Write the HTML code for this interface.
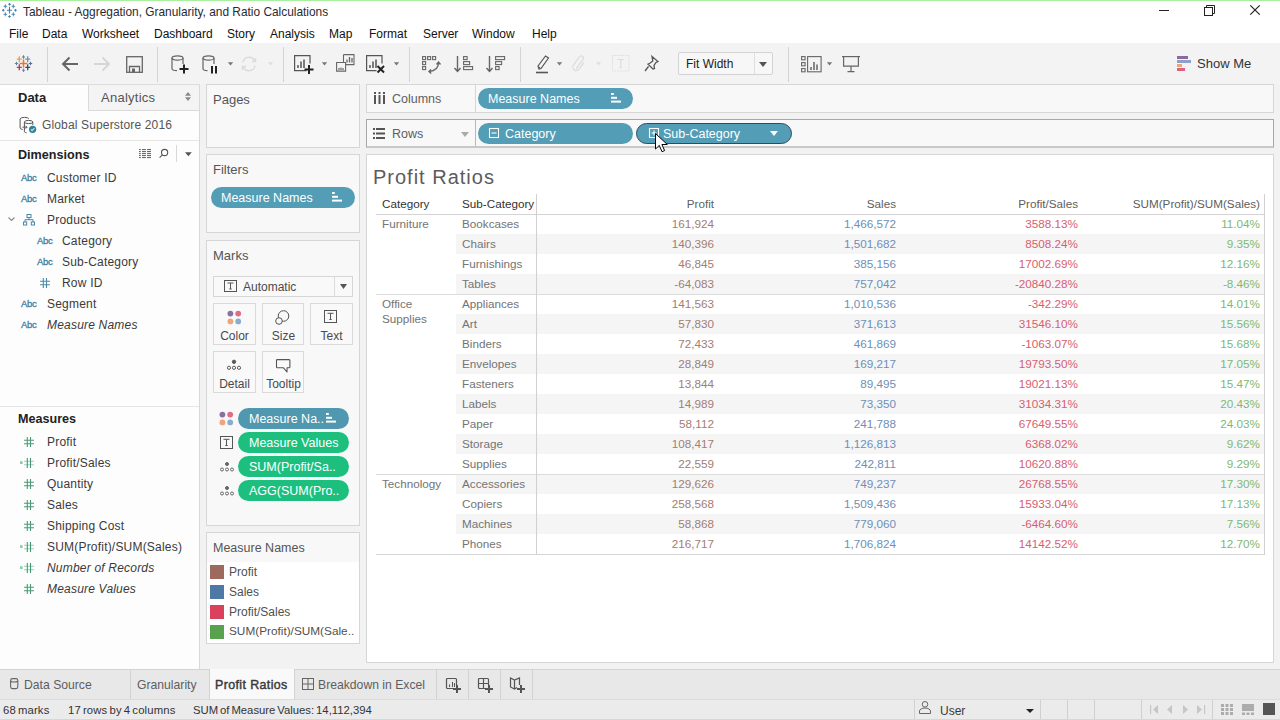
<!DOCTYPE html>
<html><head><meta charset="utf-8">
<style>
*{box-sizing:border-box;margin:0;padding:0}
html,body{width:1280px;height:720px;overflow:hidden;background:#f3f3f4;font-family:"Liberation Sans",sans-serif;color:#333}
.a{position:absolute}
.t{position:absolute;white-space:nowrap;line-height:1}
svg{position:absolute;overflow:visible}
</style></head><body>
<!-- top green line -->
<div class="a" style="left:0;top:0;width:1280px;height:1px;background:#a8f0a0"></div>
<!-- title bar -->
<div class="a" style="left:0;top:1px;width:1280px;height:21px;background:#fff"></div>
<div class="t" style="left:23px;top:7px;font-size:11.9px;color:#2a2a35">Tableau - Aggregation, Granularity, and Ratio Calculations</div>
<svg style="left:1159px;top:10px" width="10" height="2" viewBox="0 0 10 2"><path d="M0 .5h10" stroke="#222" stroke-width="1"/></svg>
<svg style="left:1204px;top:5px" width="11" height="11" viewBox="0 0 11 11" fill="none" stroke="#222" stroke-width="1"><rect x="0.5" y="2.5" width="8" height="8"/><path d="M2.5 2.5V.5h8v8h-2"/></svg>
<svg style="left:1250px;top:5px" width="10" height="10" viewBox="0 0 10 10" fill="none" stroke="#222" stroke-width="1"><path d="M.3 .3l9.4 9.4M9.7 .3L.3 9.7" stroke-width="1.2"/></svg>
<svg style="left:0;top:0" width="20" height="20" viewBox="0 0 20 20" fill="none" stroke="#3f7fa8"><path d="M9.5 6.8v6.6M7 10.3h5" stroke-width="1.1"/><path d="M9.5 3v2.6M8.2 4.3h2.6M9.5 15.2v2.6M8.2 16.5h2.6M2 10.3h2.6M3.3 9v2.6M14.2 10.3h2.6M15.5 9v2.6" stroke-width="1.1"/><path d="M5.3 4.3v4M3.5 6.3h3.6M13.3 4.3v4M11.5 6.3h3.6M5.3 12.3v4M3.5 14.3h3.6M13.3 12.3v4M11.5 14.3h3.6" stroke-width="0.9"/></svg>
<!-- menu -->
<div class="a" style="left:0;top:22px;width:1280px;height:21px;background:#fff"></div>
<div class="t" style="top:28px;left:9px;font-size:12px;color:#111">File</div>
<div class="t" style="top:28px;left:42px;font-size:12px;color:#111">Data</div>
<div class="t" style="top:28px;left:82px;font-size:12px;color:#111">Worksheet</div>
<div class="t" style="top:28px;left:154px;font-size:12px;color:#111">Dashboard</div>
<div class="t" style="top:28px;left:227px;font-size:12px;color:#111">Story</div>
<div class="t" style="top:28px;left:270px;font-size:12px;color:#111">Analysis</div>
<div class="t" style="top:28px;left:329px;font-size:12px;color:#111">Map</div>
<div class="t" style="top:28px;left:369px;font-size:12px;color:#111">Format</div>
<div class="t" style="top:28px;left:423px;font-size:12px;color:#111">Server</div>
<div class="t" style="top:28px;left:472px;font-size:12px;color:#111">Window</div>
<div class="t" style="top:28px;left:532px;font-size:12px;color:#111">Help</div>
<!-- toolbar -->
<div class="a" style="left:0;top:43px;width:1280px;height:41px;background:#f3f3f4"></div>
<div class="a" style="left:47px;top:47px;width:1px;height:35px;background:#d4d4d4"></div>
<div class="a" style="left:157px;top:47px;width:1px;height:35px;background:#d4d4d4"></div>
<div class="a" style="left:283px;top:47px;width:1px;height:35px;background:#d4d4d4"></div>
<div class="a" style="left:409px;top:47px;width:1px;height:35px;background:#d4d4d4"></div>
<div class="a" style="left:520px;top:47px;width:1px;height:35px;background:#d4d4d4"></div>
<div class="a" style="left:788px;top:47px;width:1px;height:35px;background:#d4d4d4"></div>
<!-- tableau logo -->
<svg style="left:14px;top:54px" width="20" height="20" viewBox="0 0 20 20">
<path d="M9.5 5.5v8M5.7 9.5h7.6" stroke="#e8762c" stroke-width="1.5"/>
<path d="M9.5 1.2v3.6M7.9 3h3.2" stroke="#5b879a" stroke-width="1.1"/>
<path d="M9.5 14.5v3.6M7.9 16.3h3.2" stroke="#7e86a8" stroke-width="1.1"/>
<path d="M2.5 7.7v3.6M0.8 9.5h3.4" stroke="#5a8aa0" stroke-width="1.1"/>
<path d="M16.5 7.7v3.6M14.8 9.5h3.4" stroke="#5c6a9a" stroke-width="1.1"/>
<path d="M5.3 2.2v6M2.8 5.2h5" stroke="#e9a343" stroke-width="1.3"/>
<path d="M13.7 2.2v6M11.2 5.2h5" stroke="#6a98a8" stroke-width="1.3"/>
<path d="M5.3 10.3v6M2.8 13.3h5" stroke="#c72f54" stroke-width="1.3"/>
<path d="M13.7 10.3v6M11.2 13.3h5" stroke="#2e4a7a" stroke-width="1.3"/>
</svg>
<!-- back / fwd -->
<svg style="left:61px;top:56px" width="18" height="16" viewBox="0 0 18 16" fill="none" stroke="#666" stroke-width="2"><path d="M2 8h15M8.5 1.5L2 8l6.5 6.5"/></svg>
<svg style="left:93px;top:56px" width="18" height="16" viewBox="0 0 18 16" fill="none" stroke="#d6d6d6" stroke-width="2"><path d="M1 8h15M9.5 1.5L16 8l-6.5 6.5"/></svg>
<!-- save -->
<svg style="left:126px;top:56px" width="17" height="17" viewBox="0 0 17 17" fill="none" stroke="#666" stroke-width="1.3"><rect x="0.7" y="0.7" width="15.6" height="15.6"/><path d="M3.5 16.3V10.5h10v5.8"/><rect x="6" y="12.5" width="3" height="3.5" fill="#666" stroke="none"/></svg>
<!-- datasource + -->
<svg style="left:171px;top:55px" width="18" height="19" viewBox="0 0 18 19" fill="none" stroke="#666" stroke-width="1.2"><ellipse cx="6.5" cy="3" rx="5.5" ry="2.2"/><path d="M1 3v10.5c0 1.2 2.2 2.2 5 2.2M12 3v6"/><path d="M13 9.5v9M8.5 14h9" stroke="#222" stroke-width="2"/></svg>
<!-- pause ds -->
<svg style="left:202px;top:55px" width="18" height="19" viewBox="0 0 18 19" fill="none" stroke="#666" stroke-width="1.2"><ellipse cx="6.5" cy="3" rx="5.5" ry="2.2"/><path d="M1 3v10.5c0 1.2 2.2 2.2 4.5 2.2M12 3v6"/><path d="M10 11v7.5M14 11v7.5" stroke="#222" stroke-width="2"/></svg>
<svg style="left:227px;top:62px" width="7" height="4" viewBox="0 0 7 4"><path d="M.8 .3h5.4L3.5 3.6z" fill="#777"/></svg>
<svg style="left:241px;top:56px" width="16" height="16" viewBox="0 0 16 16" fill="none" stroke="#dadada" stroke-width="1.4"><path d="M2 6.5A6 6 0 0 1 13.5 5M14 9.5A6 6 0 0 1 2.5 11"/><path d="M14.5 2v3.5H11M1.5 14v-3.5H5"/></svg>
<svg style="left:267px;top:62px" width="7" height="4" viewBox="0 0 7 4"><path d="M.8 .3h5.4L3.5 3.6z" fill="#ddd"/></svg>
<!-- new sheet -->
<svg style="left:294px;top:55px" width="21" height="19" viewBox="0 0 21 19" fill="none" stroke="#555" stroke-width="1.2"><path d="M12.5 15.6H0.6V0.6h15.4v8"/><path d="M4 13V10M7 13V6.5M10 13V4.5" stroke-width="1.5"/><path d="M15 10v9M10.5 14.5h9" stroke="#222" stroke-width="2"/></svg>
<svg style="left:321px;top:62px" width="7" height="4" viewBox="0 0 7 4"><path d="M.8 .3h5.4L3.5 3.6z" fill="#777"/></svg>
<!-- duplicate -->
<svg style="left:336px;top:54px" width="19" height="18" viewBox="0 0 19 18" fill="none" stroke="#666" stroke-width="1.1"><path d="M0.6 8.5h9v8.6H0.6z" fill="#f3f3f4"/><path d="M7.5 0.6h10.5v10H10"/><path d="M7.5 0.6v7.5"/><path d="M11 8.5v-3M13.5 8.5V3M16 8.5V4" stroke-width="1.3"/><path d="M3 16v-2M5 16v-2.5M7 16v-2" stroke-width="1.2"/></svg>
<!-- clear -->
<svg style="left:366px;top:55px" width="20" height="19" viewBox="0 0 20 19" fill="none" stroke="#555" stroke-width="1.2"><path d="M10.5 15.6H0.6V0.6h15.4v8"/><path d="M4 13V10M7 13V6.5M10 13V4.5" stroke-width="1.5"/><path d="M11.5 11l6.5 6.5M18 11l-6.5 6.5" stroke="#222" stroke-width="2"/></svg>
<svg style="left:393px;top:62px" width="7" height="4" viewBox="0 0 7 4"><path d="M.8 .3h5.4L3.5 3.6z" fill="#777"/></svg>
<!-- swap -->
<svg style="left:422px;top:56px" width="20" height="18" viewBox="0 0 20 18" fill="none" stroke="#666" stroke-width="1.1"><rect x="0.6" y="0.6" width="3" height="3"/><rect x="5.6" y="0.6" width="3" height="3"/><rect x="10.6" y="0.6" width="3" height="3"/><rect x="0.6" y="5.6" width="3" height="3"/><rect x="0.6" y="10.6" width="3" height="3"/><path d="M16.5 6.5c0 5-3 8.5-9.5 9" stroke-width="1.4"/><path d="M14.5 8.5l2-2.5 2 2.5M9 13.5l-2 2 2.2 2" stroke-width="1.4"/></svg>
<!-- sort asc -->
<svg style="left:454px;top:56px" width="20" height="17" viewBox="0 0 20 17" fill="none" stroke="#666" stroke-width="1.1"><path d="M3.5 0v15M0.5 12l3 3.5 3-3.5" stroke-width="1.4"/><rect x="9.6" y="0.6" width="3.5" height="3"/><rect x="9.6" y="5.6" width="6" height="3"/><rect x="9.6" y="10.6" width="9" height="3"/></svg>
<!-- sort desc -->
<svg style="left:486px;top:56px" width="20" height="17" viewBox="0 0 20 17" fill="none" stroke="#666" stroke-width="1.1"><path d="M3.5 0v15M0.5 12l3 3.5 3-3.5" stroke-width="1.4"/><rect x="9.6" y="0.6" width="9" height="3"/><rect x="9.6" y="5.6" width="6" height="3"/><rect x="9.6" y="10.6" width="3.5" height="3"/></svg>
<!-- highlighter -->
<svg style="left:535px;top:55px" width="16" height="19" viewBox="0 0 16 19" fill="none" stroke="#555" stroke-width="1.2"><path d="M4 14l-1-3 7.5-10 3 2L6 13.5z"/><path d="M3.5 12l1.5 1" /><path d="M1 17.5h12" stroke="#555" stroke-width="1.6"/></svg>
<svg style="left:556px;top:62px" width="7" height="4" viewBox="0 0 7 4"><path d="M.8 .3h5.4L3.5 3.6z" fill="#777"/></svg>
<svg style="left:572px;top:56px" width="14" height="17" viewBox="0 0 14 17" fill="none" stroke="#ddd" stroke-width="1.3"><path d="M4 13L11 3.5a2.2 2.2 0 0 0-3.6-2.6L1.5 9a3.5 3.5 0 0 0 5.6 4.2L12 6.5"/></svg>
<svg style="left:595px;top:62px" width="7" height="4" viewBox="0 0 7 4"><path d="M.8 .3h5.4L3.5 3.6z" fill="#e0e0e0"/></svg>
<svg style="left:612px;top:55px" width="18" height="17" viewBox="0 0 18 17" fill="none" stroke="#ddd" stroke-width="1" stroke-dasharray="1.5 1"><rect x="0.5" y="0.5" width="16.5" height="15.5"/><path d="M5.5 4.5h6.5M8.75 4.5v8M7.5 12.5h2.5" stroke-dasharray="none" stroke-width="1.2"/></svg>
<!-- pin -->
<svg style="left:644px;top:55px" width="16" height="17" viewBox="0 0 16 17" fill="none" stroke="#555" stroke-width="1.3"><path d="M8 1.5l6 5-2 1-2 3 .5 3-1.5.5-5-4.8 1.8-1 3-2.3z"/><path d="M4.5 11.5L1 16"/></svg>
<!-- fit width -->
<div class="a" style="left:678px;top:52px;width:95px;height:23px;background:#f7f7f8;border:1px solid #d3d3d3;border-radius:2px"></div>
<div class="a" style="left:754px;top:53px;width:1px;height:21px;background:#dedede"></div>
<div class="t" style="left:686px;top:58px;font-size:12px;color:#222">Fit Width</div>
<svg style="left:759px;top:62px" width="8" height="5" viewBox="0 0 8 5"><path d="M0 0h8L4 5z" fill="#555"/></svg>
<!-- cards -->
<svg style="left:801px;top:56px" width="21" height="17" viewBox="0 0 21 17" fill="none" stroke="#666" stroke-width="1.1"><rect x="0.6" y="0.6" width="3.5" height="3.2"/><rect x="0.6" y="6.6" width="3.5" height="3.2"/><rect x="0.6" y="12.6" width="3.5" height="3.2"/><rect x="6.6" y="0.6" width="13.5" height="15.2"/><path d="M10 14v-3M13 14V6M16 14V8.5" stroke-width="1.5"/></svg>
<svg style="left:826px;top:62px" width="7" height="4" viewBox="0 0 7 4"><path d="M.8 .3h5.4L3.5 3.6z" fill="#777"/></svg>
<!-- presentation -->
<svg style="left:842px;top:55px" width="18" height="18" viewBox="0 0 18 18" fill="none" stroke="#666" stroke-width="1.2"><path d="M0 1.6h18"/><path d="M1.6 1.6v9.5h14.8V1.6"/><path d="M9 11v5.5M5.5 16.6h7"/></svg>
<!-- show me -->
<svg style="left:1177px;top:56px" width="15" height="16" viewBox="0 0 15 16"><rect x="0" y="0" width="11" height="3" fill="#8a6aa0"/><rect x="0" y="4" width="14" height="3" fill="#8aa2c8"/><rect x="0" y="8" width="5" height="3" fill="#eea57c"/><rect x="0" y="12" width="8" height="3" fill="#e0607e"/></svg>
<div class="t" style="left:1197px;top:57px;font-size:13px;color:#333">Show Me</div>

<!-- LEFT PANEL -->
<div class="a" style="left:0;top:84px;width:200px;height:585px;background:#fdfdfd;border-right:1px solid #d9d9d9;border-top:1px solid #dcdcdc"></div>

<div class="a" style="left:88px;top:85px;width:111px;height:26px;background:#f4f4f5;border-left:1px solid #dadada;border-bottom:1px solid #dadada"></div>
<div class="t" style="left:18px;top:91px;font-size:13px;font-weight:bold;color:#222">Data</div>
<div class="t" style="left:101px;top:91px;font-size:13px;letter-spacing:0.25px;color:#555">Analytics</div>
<svg style="left:185px;top:92px" width="6" height="9" viewBox="0 0 6 9" fill="#888"><path d="M0 3.7L3 0l3 3.7zM0 5.3h6L3 9z"/></svg>
<svg style="left:19px;top:116px" width="19" height="18" viewBox="0 0 19 18" fill="none" stroke="#555" stroke-width="1"><path d="M9.8 2.6C8.8 .9 2.2 .9 1.1 2.8V12c0 .8 1.5 1.3 2.6 1.4"/><ellipse cx="9.6" cy="6" rx="4.2" ry="1.6"/><path d="M5.4 6v9.6c0 .7 1 1 2.2 1.2M13.8 6v3"/><path d="M3.3 11.2h4.6M6.6 9.7l1.5 1.5-1.5 1.5" stroke="#6a5a5e"/><circle cx="13.6" cy="13.3" r="3.6" fill="#2f8099" stroke="none"/><path d="M11.9 13.4l1.2 1.2 2.3-2.5" stroke="#c4e8f4" stroke-width="1.1"/></svg>
<div class="t" style="left:42px;top:119px;font-size:12px;letter-spacing:0.15px;color:#555">Global Superstore 2016</div>
<div class="a" style="left:0;top:140px;width:199px;height:1px;background:#e6e6e6"></div>
<div class="t" style="left:18px;top:149px;font-size:12.6px;font-weight:bold;color:#222">Dimensions</div>
<svg style="left:139px;top:149px" width="12" height="10" viewBox="0 0 12 10" fill="#6a6a6a"><rect x="0" y="0" width="1.8" height="1.1"/><rect x="3" y="0" width="3.9" height="1.1"/><rect x="8" y="0" width="4" height="1.1"/><rect x="0" y="2" width="1.8" height="1.1"/><rect x="3" y="2" width="3.9" height="1.1"/><rect x="8" y="2" width="4" height="1.1"/><rect x="0" y="4" width="1.8" height="1.1"/><rect x="3" y="4" width="3.9" height="1.1"/><rect x="8" y="4" width="4" height="1.1"/><rect x="0" y="6" width="1.8" height="1.1"/><rect x="3" y="6" width="3.9" height="1.1"/><rect x="8" y="6" width="4" height="1.1"/><rect x="0" y="8" width="1.8" height="1.1"/><rect x="3" y="8" width="3.9" height="1.1"/><rect x="8" y="8" width="4" height="1.1"/></svg>
<svg style="left:159px;top:148px" width="10" height="10" viewBox="0 0 10 10" fill="none" stroke="#555" stroke-width="1.1"><circle cx="5.6" cy="4.5" r="3.1"/><path d="M3.4 6.8L.6 9.6"/></svg>
<div class="a" style="left:176px;top:145px;width:1px;height:17px;background:#d8d8d8"></div>
<svg style="left:185px;top:152px" width="7" height="5" viewBox="0 0 7 5"><path d="M0 .2h6.8L3.4 4.3z" fill="#555"/></svg>
<div class="t" style="left:21px;top:173px;font-size:9.5px;color:#417f9f;letter-spacing:-0.3px;-webkit-text-stroke:0.3px #417f9f">Abc</div><div class="t" style="left:47px;top:172px;font-size:12px;color:#3a3a3a;letter-spacing:0.2px;">Customer ID</div>
<div class="t" style="left:21px;top:194px;font-size:9.5px;color:#417f9f;letter-spacing:-0.3px;-webkit-text-stroke:0.3px #417f9f">Abc</div><div class="t" style="left:47px;top:193px;font-size:12px;color:#3a3a3a;letter-spacing:0.2px;">Market</div>
<svg style="left:8px;top:217px" width="7" height="5" viewBox="0 0 7 5" fill="none" stroke="#888" stroke-width="1.1"><path d="M.5 .5L3.5 3.5 6.5 .5"/></svg><svg style="left:23px;top:214px" width="12" height="12" viewBox="0 0 12 12" fill="none" stroke="#4a88a8" stroke-width="1"><rect x="4" y="0.5" width="4" height="3"/><path d="M6 3.5v2.2M2 5.7h8M2 5.7v2.3M10 5.7v2.3"/><rect x="0.5" y="8" width="3.2" height="3"/><rect x="8.3" y="8" width="3.2" height="3"/></svg><div class="t" style="left:47px;top:214px;font-size:12px;color:#3a3a3a;letter-spacing:0.2px;">Products</div>
<div class="t" style="left:37px;top:236px;font-size:9.5px;color:#417f9f;letter-spacing:-0.3px;-webkit-text-stroke:0.3px #417f9f">Abc</div><div class="t" style="left:62px;top:235px;font-size:12px;color:#3a3a3a;letter-spacing:0.2px;">Category</div>
<div class="t" style="left:37px;top:257px;font-size:9.5px;color:#417f9f;letter-spacing:-0.3px;-webkit-text-stroke:0.3px #417f9f">Abc</div><div class="t" style="left:62px;top:256px;font-size:12px;color:#3a3a3a;letter-spacing:0.2px;">Sub-Category</div>
<svg style="left:40px;top:278px" width="10" height="10" viewBox="0 0 10 10" stroke="#4d8aa7" stroke-width="1.1"><path d="M3.3 0v10M6.5 0v10M0 3.3h10M0 6.7h10"/></svg><div class="t" style="left:62px;top:277px;font-size:12px;color:#3a3a3a;letter-spacing:0.2px;">Row ID</div>
<div class="t" style="left:21px;top:299px;font-size:9.5px;color:#417f9f;letter-spacing:-0.3px;-webkit-text-stroke:0.3px #417f9f">Abc</div><div class="t" style="left:47px;top:298px;font-size:12px;color:#3a3a3a;letter-spacing:0.2px;">Segment</div>
<div class="t" style="left:21px;top:320px;font-size:9.5px;color:#417f9f;letter-spacing:-0.3px;-webkit-text-stroke:0.3px #417f9f">Abc</div><div class="t" style="left:47px;top:319px;font-size:12px;color:#3a3a3a;letter-spacing:0.2px; font-style:italic;">Measure Names</div>
<div class="a" style="left:0;top:406px;width:199px;height:1px;background:#e6e6e6"></div>
<div class="t" style="left:18px;top:413px;font-size:12.6px;font-weight:bold;color:#222">Measures</div>
<svg style="left:24px;top:437px" width="10" height="10" viewBox="0 0 10 10" stroke="#4a9a78" stroke-width="1.1"><path d="M3.3 0v10M6.5 0v10M0 3.3h10M0 6.7h10"/></svg><div class="t" style="left:47px;top:436px;font-size:12px;color:#3a3a3a;letter-spacing:0.2px;">Profit</div>
<svg style="left:20px;top:458px" width="14" height="10" viewBox="0 0 14 10" stroke-width="1.1"><path d="M4 3.3h10M4 6.7h10" stroke="#9fd2bb"/><path d="M7.3 0v10M10.5 0v10" stroke="#3f9a74"/><rect x="0" y="3.2" width="2.6" height="2.8" fill="#8fc9ae" stroke="none"/></svg><div class="t" style="left:47px;top:457px;font-size:12px;color:#3a3a3a;letter-spacing:0.2px;">Profit/Sales</div>
<svg style="left:24px;top:479px" width="10" height="10" viewBox="0 0 10 10" stroke="#4a9a78" stroke-width="1.1"><path d="M3.3 0v10M6.5 0v10M0 3.3h10M0 6.7h10"/></svg><div class="t" style="left:47px;top:478px;font-size:12px;color:#3a3a3a;letter-spacing:0.2px;">Quantity</div>
<svg style="left:24px;top:500px" width="10" height="10" viewBox="0 0 10 10" stroke="#4a9a78" stroke-width="1.1"><path d="M3.3 0v10M6.5 0v10M0 3.3h10M0 6.7h10"/></svg><div class="t" style="left:47px;top:499px;font-size:12px;color:#3a3a3a;letter-spacing:0.2px;">Sales</div>
<svg style="left:24px;top:521px" width="10" height="10" viewBox="0 0 10 10" stroke="#4a9a78" stroke-width="1.1"><path d="M3.3 0v10M6.5 0v10M0 3.3h10M0 6.7h10"/></svg><div class="t" style="left:47px;top:520px;font-size:12px;color:#3a3a3a;letter-spacing:0.2px;">Shipping Cost</div>
<svg style="left:20px;top:542px" width="14" height="10" viewBox="0 0 14 10" stroke-width="1.1"><path d="M4 3.3h10M4 6.7h10" stroke="#9fd2bb"/><path d="M7.3 0v10M10.5 0v10" stroke="#3f9a74"/><rect x="0" y="3.2" width="2.6" height="2.8" fill="#8fc9ae" stroke="none"/></svg><div class="t" style="left:47px;top:541px;font-size:12px;color:#3a3a3a;letter-spacing:0.2px;">SUM(Profit)/SUM(Sales)</div>
<svg style="left:20px;top:563px" width="14" height="10" viewBox="0 0 14 10" stroke-width="1.1"><path d="M4 3.3h10M4 6.7h10" stroke="#9fd2bb"/><path d="M7.3 0v10M10.5 0v10" stroke="#3f9a74"/><rect x="0" y="3.2" width="2.6" height="2.8" fill="#8fc9ae" stroke="none"/></svg><div class="t" style="left:47px;top:562px;font-size:12px;color:#3a3a3a;letter-spacing:0.2px; font-style:italic;">Number of Records</div>
<svg style="left:24px;top:584px" width="10" height="10" viewBox="0 0 10 10" stroke="#4a9a78" stroke-width="1.1"><path d="M3.3 0v10M6.5 0v10M0 3.3h10M0 6.7h10"/></svg><div class="t" style="left:47px;top:583px;font-size:12px;color:#3a3a3a;letter-spacing:0.2px; font-style:italic;">Measure Values</div>
<!-- CARDS -->
<div class="a" style="left:200px;top:85px;width:1080px;height:584px;background:#f2f2f3"></div>
<!-- pages -->
<div class="a" style="left:206px;top:84px;width:154px;height:64px;background:#f8f8f9;border:1px solid #d6d6d6"></div>
<div class="t" style="left:213px;top:93px;font-size:13px;color:#555">Pages</div>
<!-- filters -->
<div class="a" style="left:206px;top:154px;width:154px;height:79px;background:#f8f8f9;border:1px solid #d6d6d6"></div>
<div class="t" style="left:213px;top:163px;font-size:13px;color:#555">Filters</div>
<div class="a" style="left:211px;top:187px;width:144px;height:21px;background:#539db6;border-radius:11px"></div>
<div class="t" style="left:221px;top:192px;font-size:12.5px;color:#fff">Measure Names</div>
<svg style="left:332px;top:192px" width="11" height="10" viewBox="0 0 11 10" fill="#fff"><rect x="0" y="0" width="2.8" height="2"/><rect x="0" y="3.8" width="6" height="2"/><rect x="0" y="7.6" width="10" height="2"/></svg>
<!-- marks -->
<div class="a" style="left:206px;top:240px;width:154px;height:286px;background:#f8f8f9;border:1px solid #d6d6d6"></div>
<div class="t" style="left:213px;top:249px;font-size:13px;color:#555">Marks</div>
<div class="a" style="left:213px;top:276px;width:140px;height:21px;background:#f9f9fa;border:1px solid #d6d6d6"></div>
<div class="a" style="left:334px;top:277px;width:1px;height:19px;background:#dadada"></div>
<svg style="left:224px;top:280px" width="13" height="12" viewBox="0 0 13 12" fill="none" stroke="#555" stroke-width="1"><rect x="0.5" y="0.5" width="12" height="11"/><path d="M3.5 3h6M6.5 3v6M5.3 9h2.4"/></svg>
<div class="t" style="left:243px;top:281px;font-size:12px;color:#4a4a4a">Automatic</div>
<svg style="left:340px;top:284px" width="7" height="5" viewBox="0 0 7 5"><path d="M0 0h7L3.5 5z" fill="#555"/></svg>
<div class="a" style="left:213px;top:303px;width:43px;height:42px;background:#f9f9fa;border:1px solid #dadada"></div>
<div class="t" style="left:213px;width:43px;text-align:center;top:330px;font-size:12px;color:#4a4a4a">Color</div>
<div class="a" style="left:262px;top:303px;width:42px;height:42px;background:#f9f9fa;border:1px solid #dadada"></div>
<div class="t" style="left:262px;width:43px;text-align:center;top:330px;font-size:12px;color:#4a4a4a">Size</div>
<div class="a" style="left:310px;top:303px;width:43px;height:42px;background:#f9f9fa;border:1px solid #dadada"></div>
<div class="t" style="left:310px;width:43px;text-align:center;top:330px;font-size:12px;color:#4a4a4a">Text</div>
<div class="a" style="left:213px;top:351px;width:43px;height:42px;background:#f9f9fa;border:1px solid #dadada"></div>
<div class="t" style="left:213px;width:43px;text-align:center;top:378px;font-size:12px;color:#4a4a4a">Detail</div>
<div class="a" style="left:262px;top:351px;width:42px;height:42px;background:#f9f9fa;border:1px solid #dadada"></div>
<div class="t" style="left:262px;width:43px;text-align:center;top:378px;font-size:12px;color:#4a4a4a">Tooltip</div>
<svg style="left:227px;top:310px" width="15" height="15" viewBox="0 0 15 15"><circle cx="3.4" cy="3.6" r="2.9" fill="#8a6fa0"/><circle cx="11.2" cy="3.6" r="2.9" fill="#e06c85"/><circle cx="3.4" cy="11.4" r="2.9" fill="#eea57c"/><circle cx="11.2" cy="11.4" r="2.9" fill="#8aaccd"/></svg>
<svg style="left:275px;top:310px" width="15" height="15" viewBox="0 0 15 15" fill="none" stroke="#555" stroke-width="1"><circle cx="8.5" cy="6" r="5.3"/><circle cx="4" cy="11" r="3.3" fill="#f9f9fa"/></svg>
<svg style="left:324px;top:310px" width="13" height="13" viewBox="0 0 13 13" fill="none" stroke="#555" stroke-width="1"><rect x="0.5" y="0.5" width="12" height="12"/><path d="M3.5 3.3h6M6.5 3.3v6.2M5.3 9.5h2.4"/></svg>
<svg style="left:227px;top:359px" width="14" height="11" viewBox="0 0 14 11" fill="none" stroke="#5a5a5a" stroke-width="1"><circle cx="7" cy="2.8" r="1.7" fill="#5a5a5a"/><circle cx="2" cy="8.8" r="1.6"/><circle cx="7" cy="8.8" r="1.6"/><circle cx="12" cy="8.8" r="1.6"/></svg>
<svg style="left:276px;top:359px" width="15" height="14" viewBox="0 0 15 14" fill="none" stroke="#555" stroke-width="1.1"><path d="M1.3 .6h11.8a.8.8 0 0 1 .8.8v6.6a.8.8 0 0 1-.8.8H11v4.2L7.5 8.8H1.3a.8.8 0 0 1-.8-.8V1.4a.8.8 0 0 1 .8-.8z" stroke-linejoin="round"/></svg>
<!-- marks pills -->
<svg style="left:219px;top:411px" width="15" height="15" viewBox="0 0 15 15"><circle cx="3.4" cy="3.6" r="2.9" fill="#8a6fa0"/><circle cx="11.2" cy="3.6" r="2.9" fill="#e06c85"/><circle cx="3.4" cy="11.4" r="2.9" fill="#eea57c"/><circle cx="11.2" cy="11.4" r="2.9" fill="#8aaccd"/></svg>
<div class="a" style="left:238px;top:408px;width:111px;height:21px;background:#5097b0;border-radius:11px"></div>
<div class="t" style="left:249px;top:413px;font-size:12.5px;color:#fff">Measure Na..</div>
<svg style="left:326px;top:413px" width="11" height="10" viewBox="0 0 11 10" fill="#fff"><rect x="0" y="0" width="2.8" height="2"/><rect x="0" y="3.8" width="6" height="2"/><rect x="0" y="7.6" width="10" height="2"/></svg>
<svg style="left:220px;top:436px" width="13" height="13" viewBox="0 0 13 13" fill="none" stroke="#555" stroke-width="1"><rect x="0.5" y="0.5" width="12" height="12"/><path d="M3.5 3.3h6M6.5 3.3v6.2M5.3 9.5h2.4"/></svg>
<div class="a" style="left:238px;top:432px;width:111px;height:21px;background:#1dbf7f;border-radius:11px"></div>
<div class="t" style="left:249px;top:437px;font-size:12.5px;color:#fff">Measure Values</div>
<svg style="left:220px;top:462px" width="14" height="10" viewBox="0 0 14 10" fill="none" stroke="#666" stroke-width="1"><circle cx="7" cy="2" r="1.5" fill="#666"/><circle cx="2" cy="7.5" r="1.5"/><circle cx="7" cy="7.5" r="1.5"/><circle cx="12" cy="7.5" r="1.5"/></svg>
<div class="a" style="left:238px;top:456px;width:111px;height:21px;background:#1dbf7f;border-radius:11px"></div>
<div class="t" style="left:249px;top:461px;font-size:12.5px;color:#fff">SUM(Profit/Sa..</div>
<svg style="left:220px;top:486px" width="14" height="10" viewBox="0 0 14 10" fill="none" stroke="#666" stroke-width="1"><circle cx="7" cy="2" r="1.5" fill="#666"/><circle cx="2" cy="7.5" r="1.5"/><circle cx="7" cy="7.5" r="1.5"/><circle cx="12" cy="7.5" r="1.5"/></svg>
<div class="a" style="left:238px;top:480px;width:111px;height:21px;background:#1dbf7f;border-radius:11px"></div>
<div class="t" style="left:249px;top:485px;font-size:12.5px;color:#fff">AGG(SUM(Pro..</div>
<!-- legend -->
<div class="a" style="left:206px;top:532px;width:154px;height:112px;background:#f8f8f9;border:1px solid #d6d6d6"></div>
<div class="a" style="left:207px;top:562px;width:152px;height:81px;background:#fff"></div>
<div class="t" style="left:213px;top:542px;font-size:12.5px;color:#555">Measure Names</div>
<div class="a" style="left:210px;top:565px;width:14px;height:14px;background:#9c6b5e"></div>
<div class="t" style="left:229px;top:566px;font-size:12px;color:#505050">Profit</div>
<div class="a" style="left:210px;top:585px;width:14px;height:14px;background:#4e79a7"></div>
<div class="t" style="left:229px;top:586px;font-size:12px;color:#505050">Sales</div>
<div class="a" style="left:210px;top:605px;width:14px;height:14px;background:#d9425a"></div>
<div class="t" style="left:229px;top:606px;font-size:12px;color:#505050">Profit/Sales</div>
<div class="a" style="left:210px;top:625px;width:14px;height:14px;background:#59a14f"></div>
<div class="t" style="left:229px;top:626px;font-size:11.8px;color:#505050">SUM(Profit)/SUM(Sale..</div>


<!-- SHELVES & VIEW -->
<!-- columns shelf -->
<div class="a" style="left:366px;top:84px;width:908px;height:29px;background:#f8f8f9;border:1px solid #d6d6d6"></div>
<div class="a" style="left:475px;top:85px;width:1px;height:27px;background:#d6d6d6"></div>
<svg style="left:374px;top:92px" width="11" height="12" viewBox="0 0 11 12" fill="#555"><rect x="0" y="0" width="2" height="2"/><rect x="4.5" y="0" width="2" height="2"/><rect x="9" y="0" width="2" height="2"/><rect x="0" y="3" width="2" height="9"/><rect x="4.5" y="3" width="2" height="9"/><rect x="9" y="3" width="2" height="9"/></svg>
<div class="t" style="left:392px;top:93px;font-size:12.5px;color:#606060">Columns</div>
<div class="a" style="left:478px;top:88px;width:155px;height:21px;background:#539db6;border-radius:11px"></div>
<div class="t" style="left:488px;top:93px;font-size:12.5px;color:#fff">Measure Names</div>
<svg style="left:611px;top:93px" width="11" height="10" viewBox="0 0 11 10" fill="#fff"><rect x="0" y="0" width="2.8" height="2"/><rect x="0" y="3.8" width="6" height="2"/><rect x="0" y="7.6" width="10" height="2"/></svg>
<!-- rows shelf -->
<div class="a" style="left:366px;top:119px;width:908px;height:29px;background:#f8f8f9;border:1px solid #a8a8a8;border-bottom:2px solid #c8c8c8"></div>
<div class="a" style="left:475px;top:120px;width:1px;height:26px;background:#b8b8b8"></div>
<svg style="left:373px;top:128px" width="12" height="11" viewBox="0 0 12 11" fill="#555"><rect x="0" y="0" width="2" height="2"/><rect x="0" y="4.5" width="2" height="2"/><rect x="0" y="9" width="2" height="2"/><rect x="3" y="0" width="9" height="2"/><rect x="3" y="4.5" width="9" height="2"/><rect x="3" y="9" width="9" height="2"/></svg>
<div class="t" style="left:392px;top:128px;font-size:12.5px;color:#606060">Rows</div>
<svg style="left:461px;top:132px" width="8" height="5" viewBox="0 0 8 5"><path d="M0 0h8L4 5z" fill="#aaa"/></svg>
<div class="a" style="left:478px;top:123px;width:155px;height:21px;background:#539db6;border-radius:11px"></div>
<svg style="left:489px;top:128px" width="10" height="10" viewBox="0 0 10 10" fill="none" stroke="#fff" stroke-width="1.1"><rect x="0.5" y="0.5" width="9" height="9"/><path d="M2.5 5h5"/></svg>
<div class="t" style="left:505px;top:128px;font-size:12.5px;color:#fff">Category</div>
<div class="a" style="left:636px;top:123px;width:156px;height:21px;background:#539db6;border-radius:11px;border:1px solid #2e4b62"></div>
<svg style="left:649px;top:128px" width="10" height="10" viewBox="0 0 10 10" fill="none" stroke="#fff" stroke-width="1.1"><rect x="0.5" y="0.5" width="9" height="9"/><path d="M2.5 5h5M5 2.5v5"/></svg>
<div class="t" style="left:663px;top:128px;font-size:12.5px;color:#fff">Sub-Category</div>
<svg style="left:770px;top:131px" width="8" height="5" viewBox="0 0 8 5"><path d="M0 0h8L4 5z" fill="#fff"/></svg>
<!-- view -->
<div class="a" style="left:366px;top:154px;width:908px;height:509px;background:#fff;border:1px solid #d6d6d6"></div>
<div class="t" style="left:373px;top:167px;font-size:20px;letter-spacing:1px;color:#5c5c5c">Profit Ratios</div>
<div class="a" style="left:456px;top:234px;width:808px;height:20px;background:#f5f5f6"></div>
<div class="a" style="left:456px;top:274px;width:808px;height:20px;background:#f5f5f6"></div>
<div class="a" style="left:456px;top:314px;width:808px;height:20px;background:#f5f5f6"></div>
<div class="a" style="left:456px;top:354px;width:808px;height:20px;background:#f5f5f6"></div>
<div class="a" style="left:456px;top:394px;width:808px;height:20px;background:#f5f5f6"></div>
<div class="a" style="left:456px;top:434px;width:808px;height:20px;background:#f5f5f6"></div>
<div class="a" style="left:456px;top:474px;width:808px;height:20px;background:#f5f5f6"></div>
<div class="a" style="left:456px;top:514px;width:808px;height:20px;background:#f5f5f6"></div>
<div class="a" style="left:376px;top:214px;width:888px;height:1px;background:#d4d4d4"></div>
<div class="a" style="left:376px;top:294px;width:888px;height:1px;background:#dcdcdc"></div>
<div class="a" style="left:376px;top:474px;width:888px;height:1px;background:#dcdcdc"></div>
<div class="a" style="left:376px;top:554px;width:888px;height:1px;background:#d6d6d6"></div>
<div class="a" style="left:536px;top:194px;width:1px;height:361px;background:#d0d0d0"></div>
<div class="a" style="left:1264px;top:194px;width:1px;height:361px;background:#d0d0d0"></div>
<div class="t" style="left:382px;top:198px;font-size:11.7px;color:#333">Category</div>
<div class="t" style="left:462px;top:198px;font-size:11.7px;color:#333">Sub-Category</div>
<div class="t" style="right:566px;top:198px;font-size:11.7px;color:#606060">Profit</div>
<div class="t" style="right:384px;top:198px;font-size:11.7px;color:#606060">Sales</div>
<div class="t" style="right:202px;top:198px;font-size:11.7px;color:#606060">Profit/Sales</div>
<div class="t" style="right:20px;top:198px;font-size:11.7px;color:#606060">SUM(Profit)/SUM(Sales)</div>
<div class="t" style="left:382px;top:218px;font-size:11.7px;color:#747474">Furniture</div>
<div class="t" style="left:462px;top:218px;font-size:11.7px;color:#747474">Bookcases</div>
<div class="t" style="right:566px;top:218px;font-size:11.7px;color:#a37d72">161,924</div>
<div class="t" style="right:384px;top:218px;font-size:11.7px;color:#6e8fb6">1,466,572</div>
<div class="t" style="right:202px;top:218px;font-size:11.7px;color:#d75e70">3588.13%</div>
<div class="t" style="right:20px;top:218px;font-size:11.7px;color:#80b872">11.04%</div>
<div class="t" style="left:462px;top:238px;font-size:11.7px;color:#747474">Chairs</div>
<div class="t" style="right:566px;top:238px;font-size:11.7px;color:#a37d72">140,396</div>
<div class="t" style="right:384px;top:238px;font-size:11.7px;color:#6e8fb6">1,501,682</div>
<div class="t" style="right:202px;top:238px;font-size:11.7px;color:#d75e70">8508.24%</div>
<div class="t" style="right:20px;top:238px;font-size:11.7px;color:#80b872">9.35%</div>
<div class="t" style="left:462px;top:258px;font-size:11.7px;color:#747474">Furnishings</div>
<div class="t" style="right:566px;top:258px;font-size:11.7px;color:#a37d72">46,845</div>
<div class="t" style="right:384px;top:258px;font-size:11.7px;color:#6e8fb6">385,156</div>
<div class="t" style="right:202px;top:258px;font-size:11.7px;color:#d75e70">17002.69%</div>
<div class="t" style="right:20px;top:258px;font-size:11.7px;color:#80b872">12.16%</div>
<div class="t" style="left:462px;top:278px;font-size:11.7px;color:#747474">Tables</div>
<div class="t" style="right:566px;top:278px;font-size:11.7px;color:#a37d72">-64,083</div>
<div class="t" style="right:384px;top:278px;font-size:11.7px;color:#6e8fb6">757,042</div>
<div class="t" style="right:202px;top:278px;font-size:11.7px;color:#d75e70">-20840.28%</div>
<div class="t" style="right:20px;top:278px;font-size:11.7px;color:#80b872">-8.46%</div>
<div class="t" style="left:382px;top:298px;font-size:11.7px;color:#747474">Office</div>
<div class="t" style="left:382px;top:313px;font-size:11.7px;color:#747474">Supplies</div>
<div class="t" style="left:462px;top:298px;font-size:11.7px;color:#747474">Appliances</div>
<div class="t" style="right:566px;top:298px;font-size:11.7px;color:#a37d72">141,563</div>
<div class="t" style="right:384px;top:298px;font-size:11.7px;color:#6e8fb6">1,010,536</div>
<div class="t" style="right:202px;top:298px;font-size:11.7px;color:#d75e70">-342.29%</div>
<div class="t" style="right:20px;top:298px;font-size:11.7px;color:#80b872">14.01%</div>
<div class="t" style="left:462px;top:318px;font-size:11.7px;color:#747474">Art</div>
<div class="t" style="right:566px;top:318px;font-size:11.7px;color:#a37d72">57,830</div>
<div class="t" style="right:384px;top:318px;font-size:11.7px;color:#6e8fb6">371,613</div>
<div class="t" style="right:202px;top:318px;font-size:11.7px;color:#d75e70">31546.10%</div>
<div class="t" style="right:20px;top:318px;font-size:11.7px;color:#80b872">15.56%</div>
<div class="t" style="left:462px;top:338px;font-size:11.7px;color:#747474">Binders</div>
<div class="t" style="right:566px;top:338px;font-size:11.7px;color:#a37d72">72,433</div>
<div class="t" style="right:384px;top:338px;font-size:11.7px;color:#6e8fb6">461,869</div>
<div class="t" style="right:202px;top:338px;font-size:11.7px;color:#d75e70">-1063.07%</div>
<div class="t" style="right:20px;top:338px;font-size:11.7px;color:#80b872">15.68%</div>
<div class="t" style="left:462px;top:358px;font-size:11.7px;color:#747474">Envelopes</div>
<div class="t" style="right:566px;top:358px;font-size:11.7px;color:#a37d72">28,849</div>
<div class="t" style="right:384px;top:358px;font-size:11.7px;color:#6e8fb6">169,217</div>
<div class="t" style="right:202px;top:358px;font-size:11.7px;color:#d75e70">19793.50%</div>
<div class="t" style="right:20px;top:358px;font-size:11.7px;color:#80b872">17.05%</div>
<div class="t" style="left:462px;top:378px;font-size:11.7px;color:#747474">Fasteners</div>
<div class="t" style="right:566px;top:378px;font-size:11.7px;color:#a37d72">13,844</div>
<div class="t" style="right:384px;top:378px;font-size:11.7px;color:#6e8fb6">89,495</div>
<div class="t" style="right:202px;top:378px;font-size:11.7px;color:#d75e70">19021.13%</div>
<div class="t" style="right:20px;top:378px;font-size:11.7px;color:#80b872">15.47%</div>
<div class="t" style="left:462px;top:398px;font-size:11.7px;color:#747474">Labels</div>
<div class="t" style="right:566px;top:398px;font-size:11.7px;color:#a37d72">14,989</div>
<div class="t" style="right:384px;top:398px;font-size:11.7px;color:#6e8fb6">73,350</div>
<div class="t" style="right:202px;top:398px;font-size:11.7px;color:#d75e70">31034.31%</div>
<div class="t" style="right:20px;top:398px;font-size:11.7px;color:#80b872">20.43%</div>
<div class="t" style="left:462px;top:418px;font-size:11.7px;color:#747474">Paper</div>
<div class="t" style="right:566px;top:418px;font-size:11.7px;color:#a37d72">58,112</div>
<div class="t" style="right:384px;top:418px;font-size:11.7px;color:#6e8fb6">241,788</div>
<div class="t" style="right:202px;top:418px;font-size:11.7px;color:#d75e70">67649.55%</div>
<div class="t" style="right:20px;top:418px;font-size:11.7px;color:#80b872">24.03%</div>
<div class="t" style="left:462px;top:438px;font-size:11.7px;color:#747474">Storage</div>
<div class="t" style="right:566px;top:438px;font-size:11.7px;color:#a37d72">108,417</div>
<div class="t" style="right:384px;top:438px;font-size:11.7px;color:#6e8fb6">1,126,813</div>
<div class="t" style="right:202px;top:438px;font-size:11.7px;color:#d75e70">6368.02%</div>
<div class="t" style="right:20px;top:438px;font-size:11.7px;color:#80b872">9.62%</div>
<div class="t" style="left:462px;top:458px;font-size:11.7px;color:#747474">Supplies</div>
<div class="t" style="right:566px;top:458px;font-size:11.7px;color:#a37d72">22,559</div>
<div class="t" style="right:384px;top:458px;font-size:11.7px;color:#6e8fb6">242,811</div>
<div class="t" style="right:202px;top:458px;font-size:11.7px;color:#d75e70">10620.88%</div>
<div class="t" style="right:20px;top:458px;font-size:11.7px;color:#80b872">9.29%</div>
<div class="t" style="left:382px;top:478px;font-size:11.7px;color:#747474">Technology</div>
<div class="t" style="left:462px;top:478px;font-size:11.7px;color:#747474">Accessories</div>
<div class="t" style="right:566px;top:478px;font-size:11.7px;color:#a37d72">129,626</div>
<div class="t" style="right:384px;top:478px;font-size:11.7px;color:#6e8fb6">749,237</div>
<div class="t" style="right:202px;top:478px;font-size:11.7px;color:#d75e70">26768.55%</div>
<div class="t" style="right:20px;top:478px;font-size:11.7px;color:#80b872">17.30%</div>
<div class="t" style="left:462px;top:498px;font-size:11.7px;color:#747474">Copiers</div>
<div class="t" style="right:566px;top:498px;font-size:11.7px;color:#a37d72">258,568</div>
<div class="t" style="right:384px;top:498px;font-size:11.7px;color:#6e8fb6">1,509,436</div>
<div class="t" style="right:202px;top:498px;font-size:11.7px;color:#d75e70">15933.04%</div>
<div class="t" style="right:20px;top:498px;font-size:11.7px;color:#80b872">17.13%</div>
<div class="t" style="left:462px;top:518px;font-size:11.7px;color:#747474">Machines</div>
<div class="t" style="right:566px;top:518px;font-size:11.7px;color:#a37d72">58,868</div>
<div class="t" style="right:384px;top:518px;font-size:11.7px;color:#6e8fb6">779,060</div>
<div class="t" style="right:202px;top:518px;font-size:11.7px;color:#d75e70">-6464.60%</div>
<div class="t" style="right:20px;top:518px;font-size:11.7px;color:#80b872">7.56%</div>
<div class="t" style="left:462px;top:538px;font-size:11.7px;color:#747474">Phones</div>
<div class="t" style="right:566px;top:538px;font-size:11.7px;color:#a37d72">216,717</div>
<div class="t" style="right:384px;top:538px;font-size:11.7px;color:#6e8fb6">1,706,824</div>
<div class="t" style="right:202px;top:538px;font-size:11.7px;color:#d75e70">14142.52%</div>
<div class="t" style="right:20px;top:538px;font-size:11.7px;color:#80b872">12.70%</div>


<svg style="left:655px;top:133px" width="13" height="20" viewBox="0 0 13 20"><path d="M.5 .5v15.5l3.8-3.6 2.7 6.3 2.6-1.1-2.7-6.1h5.4z" fill="#fff" stroke="#000" stroke-width="1"/></svg>
<!-- TABS -->
<div class="a" style="left:0;top:669px;width:1280px;height:30px;background:#e8e8e9;border-top:1px solid #d4d4d4"></div>
<div class="a" style="left:130px;top:669px;width:1px;height:30px;background:#d2d2d2"></div>
<div class="a" style="left:209px;top:669px;width:86px;height:30px;background:#f9f9fa;border-left:1px solid #d2d2d2;border-right:1px solid #d2d2d2"></div>
<div class="a" style="left:436px;top:669px;width:1px;height:30px;background:#d2d2d2"></div>
<div class="a" style="left:468px;top:669px;width:1px;height:30px;background:#d2d2d2"></div>
<div class="a" style="left:500px;top:669px;width:1px;height:30px;background:#d2d2d2"></div>
<div class="a" style="left:532px;top:669px;width:1px;height:30px;background:#d2d2d2"></div>
<svg style="left:10px;top:678px" width="9" height="12" viewBox="0 0 9 12" fill="none" stroke="#666" stroke-width="1.1"><rect x="0.6" y="0.6" width="7.2" height="10" rx="1.8"/><path d="M.6 3.3c1.5 1 5.7 1 7.2 0"/></svg>
<div class="t" style="left:24px;top:679px;font-size:12.2px;color:#5e5e5e">Data Source</div>
<div class="t" style="left:137px;top:679px;font-size:12.2px;color:#5e5e5e">Granularity</div>
<div class="t" style="left:215px;top:679px;font-size:12.4px;letter-spacing:0.4px;color:#3a3a3a;-webkit-text-stroke:0.45px #3a3a3a">Profit Ratios</div>
<svg style="left:302px;top:678px" width="12" height="12" viewBox="0 0 12 12" fill="none" stroke="#666" stroke-width="1"><rect x="0.5" y="0.5" width="11" height="11"/><path d="M6 .5v11M.5 6h11"/></svg>
<div class="t" style="left:318px;top:679px;font-size:12.2px;color:#5e5e5e">Breakdown in Excel</div>
<svg style="left:445px;top:677px" width="16" height="17" viewBox="0 0 16 17" fill="none" stroke="#555"><path d="M8.5 11.5H2.5a1 1 0 0 1-1-1V2.5a1 1 0 0 1 1-1h8a1 1 0 0 1 1 1V8" stroke-width="1.2"/><path d="M4.5 10V7.5M7.5 10V5M9.5 10V6" stroke-width="1"/><path d="M12 8v8M8 12h8" stroke-width="2"/></svg>
<svg style="left:477px;top:677px" width="16" height="17" viewBox="0 0 16 17" fill="none" stroke="#555"><path d="M8.5 11.5H2.5a1 1 0 0 1-1-1V2.5a1 1 0 0 1 1-1h8a1 1 0 0 1 1 1V8M6.5 1.5v10M1.5 6.5h10" stroke-width="1.2"/><path d="M12 8v8M8 12h8" stroke-width="2"/></svg>
<svg style="left:509px;top:677px" width="16" height="17" viewBox="0 0 16 17" fill="none" stroke="#555"><path d="M8 10.5L5.5 12 1.5 10V1l4 2L10.5 1V8M5.5 3v9" stroke-width="1.2"/><path d="M12 8v8M8 12h8" stroke-width="2"/></svg>
<!-- STATUS -->
<div class="a" style="left:0;top:699px;width:1280px;height:20px;background:#ebebec;border-top:1px solid #dcdcdc"></div>
<div class="t" style="left:3px;top:705px;font-size:11.3px;word-spacing:-1.2px;letter-spacing:0.15px;color:#333">68 marks</div>
<div class="t" style="left:68px;top:705px;font-size:11.3px;word-spacing:-1.2px;letter-spacing:0.15px;color:#333">17 rows by 4 columns</div>
<div class="t" style="left:193px;top:705px;font-size:11.3px;word-spacing:-1.2px;color:#333">SUM of Measure Values: 14,112,394</div>
<div class="a" style="left:914px;top:700px;width:1px;height:19px;background:#d0d0d0"></div>
<div class="a" style="left:1040px;top:700px;width:1px;height:19px;background:#d0d0d0"></div>
<div class="a" style="left:1067px;top:700px;width:1px;height:19px;background:#d0d0d0"></div>
<div class="a" style="left:1094px;top:700px;width:1px;height:19px;background:#d0d0d0"></div>
<div class="a" style="left:1141px;top:700px;width:1px;height:19px;background:#d0d0d0"></div>
<div class="a" style="left:1212px;top:700px;width:1px;height:19px;background:#d0d0d0"></div>
<svg style="left:919px;top:701px" width="12" height="13" viewBox="0 0 12 13" fill="none" stroke="#666" stroke-width="1"><circle cx="6" cy="3.3" r="2.8"/><path d="M.5 12.5V10c0-1.5 2.5-3 5.5-3s5.5 1.5 5.5 3v2.5z"/></svg>
<div class="t" style="left:940px;top:705px;font-size:12px;color:#3a3a3a">User</div>
<svg style="left:1026px;top:709px" width="8" height="4" viewBox="0 0 8 4"><path d="M0 0h8L4 4z" fill="#222"/></svg>
<svg style="left:1150px;top:705px" width="56" height="9" viewBox="0 0 56 9" fill="#c6c6c6"><rect x="0" y="0" width="1.2" height="9"/><path d="M8 0v9L3 4.5z"/><path d="M22 0v9l-5-4.5z"/><path d="M33 0v9l5-4.5z"/><path d="M47 0v9l5-4.5z"/><rect x="54" y="0" width="1.2" height="9"/></svg>
<svg style="left:1221px;top:704px" width="12" height="11" viewBox="0 0 12 11" fill="#acacac"><rect x="0" y="0" width="3" height="3"/><rect x="4.5" y="0" width="3" height="3"/><rect x="9" y="0" width="3" height="3"/><rect x="0" y="4" width="3" height="3"/><rect x="4.5" y="4" width="3" height="3"/><rect x="9" y="4" width="3" height="3"/><rect x="0" y="8" width="3" height="3"/><rect x="4.5" y="8" width="3" height="3"/><rect x="9" y="8" width="3" height="3"/></svg>
<svg style="left:1242px;top:704px" width="12" height="11" viewBox="0 0 12 11" fill="#acacac"><rect x="0" y="0" width="12" height="7"/><rect x="0" y="8.5" width="3" height="2.5"/><rect x="4.5" y="8.5" width="3" height="2.5"/><rect x="9" y="8.5" width="3" height="2.5"/></svg>
<svg style="left:1263px;top:703px" width="12" height="12" viewBox="0 0 12 12" fill="#555"><rect x="0" y="0" width="12" height="12"/></svg>
<div class="a" style="left:0;top:719px;width:1280px;height:1px;background:#b4f0b0"></div>
</body></html>
